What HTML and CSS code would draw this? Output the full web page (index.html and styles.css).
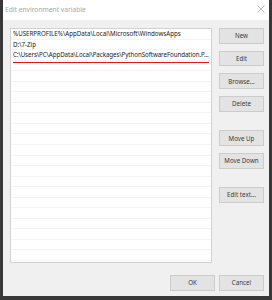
FILE: index.html
```html
<!DOCTYPE html>
<html>
<head>
<meta charset="utf-8">
<link rel="stylesheet" href="styles.css">
</head>
<body>
<div class="window">
  <div class="titlebar">
    <span class="title">Edit environment variable</span>
    <svg class="close" width="8" height="8" viewBox="0 0 8 8"><path d="M0.5 0.5 L7.5 7.5 M7.5 0.5 L0.5 7.5" stroke="#b5b5b5" stroke-width="0.9" fill="none"/></svg>
  </div>
  <div class="body">
    <div class="list">
      <div class="row">%USERPROFILE%\AppData\Local\Microsoft\WindowsApps</div>
      <div class="row">D:\7-Zip</div>
      <div class="row tight">C:\Users\PC\AppData\Local\Packages\PythonSoftwareFoundation.P...</div>
      <div class="row"></div>
      <div class="row"></div>
      <div class="row"></div>
      <div class="row"></div>
      <div class="row"></div>
      <div class="row"></div>
      <div class="row"></div>
      <div class="row"></div>
      <div class="row"></div>
      <div class="row"></div>
      <div class="row"></div>
      <div class="row"></div>
      <div class="row"></div>
      <div class="row"></div>
      <div class="row"></div>
      <div class="row"></div>
      <div class="row"></div>
      <div class="row"></div>
      <div class="row"></div>
      <span class="underline"></span>
    </div>
    <div class="buttons">
      <button class="btn">New</button>
      <button class="btn">Edit</button>
      <button class="btn">Browse...</button>
      <button class="btn">Delete</button>
      <button class="btn sep">Move Up</button>
      <button class="btn">Move Down</button>
      <button class="btn sep">Edit text...</button>
    </div>
  </div>
  <div class="footer">
    <button class="btn">OK</button>
    <button class="btn">Cancel</button>
  </div>
</div>
</body>
</html>
```

FILE: styles.css
```css
html, body {
  margin: 0;
  padding: 0;
}
body {
  width: 272px;
  height: 300px;
  overflow: hidden;
  font-family: "Noto Sans", "Open Sans", sans-serif;
}
.window {
  width: 272px;
  height: 300px;
  box-sizing: border-box;
  border-style: solid;
  border-color: #383838;
  border-width: 0 3px 4px 3px;
  background: #f0f0f0;
  display: flex;
  flex-direction: column;
}
.titlebar {
  height: 20px;
  flex: none;
  background: #ffffff;
  display: flex;
  align-items: center;
  justify-content: space-between;
  padding: 0 4px 2px 2px;
  box-sizing: border-box;
}
.title {
  font-size: 6.7px;
  color: #a8a8a8;
}
.close {
  display: block;
}
.body {
  display: flex;
  gap: 7px;
  padding: 8px 5px 0 7px;
}
.list {
  position: relative;
  width: 202px;
  height: 235px;
  box-sizing: border-box;
  border: 1px solid #d2d2d2;
  background: #ffffff;
  overflow: hidden;
}
.row {
  height: 10.55px;
  box-sizing: border-box;
  border-bottom: 1px solid #f4f4f4;
  font-size: 6.2px;
  line-height: 10px;
  color: #1a1a1a;
  padding-left: 2px;
  white-space: nowrap;
  overflow: hidden;
}
.tight {
  letter-spacing: -0.07px;
}
.underline {
  position: absolute;
  left: 2px;
  top: 32.5px;
  width: 196px;
  height: 1.5px;
  background: #e3161b;
}
.buttons {
  display: flex;
  flex-direction: column;
  gap: 7px;
}
.btn {
  width: 45px;
  height: 15.7px;
  box-sizing: border-box;
  border: 1px solid #cccccc;
  background: #e3e3e3;
  font-family: "Noto Sans", "Open Sans", sans-serif;
  font-size: 6.2px;
  color: #3a3a3a;
  padding: 0;
  margin: 0;
  line-height: 13px;
  text-align: center;
}
.sep {
  margin-top: 11.5px;
}
.footer {
  margin-top: auto;
  display: flex;
  justify-content: flex-end;
  gap: 4px;
  padding: 0 5px 5.3px 0;
}
```
